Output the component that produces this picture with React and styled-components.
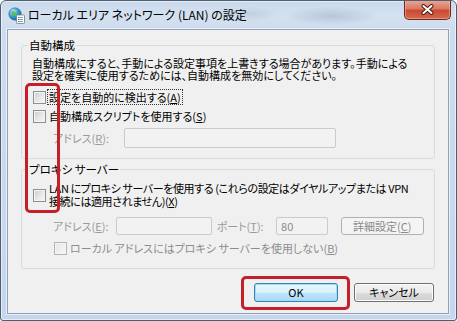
import styled, { createGlobalStyle } from "styled-components";

const GlobalStyle = createGlobalStyle`
  html, body { margin: 0; padding: 0; background: #ffffff; }
  body {
    font-family: "Noto Sans CJK JP", "Noto Sans", sans-serif;
    font-feature-settings: "palt";
    color: #000;
  }
  * { box-sizing: border-box; }
`;

export default function App() {
  return (
    <>
      <GlobalStyle />
      <Window>
        <TitleBar>
          <AppIcon />
          <Title>ローカル エリア ネットワーク (LAN) の設定</Title>
          <CloseButton aria-label="閉じる">
            <svg width="13" height="11" viewBox="0 0 13 11">
              <path d="M2.5 2 L10.5 9 M10.5 2 L2.5 9" stroke="#4a1810" strokeWidth="4" strokeLinecap="round" />
              <path d="M2.5 2 L10.5 9 M10.5 2 L2.5 9" stroke="#ffffff" strokeWidth="2" strokeLinecap="round" />
            </svg>
          </CloseButton>
        </TitleBar>
        <Frame>
          <Client>
            <Group>
              <Legend>自動構成</Legend>
              <Description>
                自動構成にすると、手動による設定事項を上書きする場合があります。手動による
                <br />
                設定を確実に使用するためには、自動構成を無効にしてください。
              </Description>
              <CheckRow $top={8}>
                <CheckBox />
                <Label $focused>設定を自動的に検出する(<u>A</u>)</Label>
              </CheckRow>
              <CheckRow $top={3}>
                <CheckBox />
                <Label>自動構成スクリプトを使用する(<u>S</u>)</Label>
              </CheckRow>
              <FieldRow $top={4} $height={20}>
                <FieldLabel $width={71}>アドレス(<u>R</u>):</FieldLabel>
                <TextBox $width={212} />
              </FieldRow>
            </Group>

            <Group $second>
              <Legend>プロキシ サーバー</Legend>
              <CheckRow $top={6}>
                <CheckBox />
                <Label $multi>
                  LAN にプロキシ サーバーを使用する (これらの設定はダイヤルアップまたは VPN
                  <br />
                  接続には適用されません)(<u>X</u>)
                </Label>
              </CheckRow>
              <FieldRow $top={9} $height={18}>
                <FieldLabel $width={64}>アドレス(<u>E</u>):</FieldLabel>
                <TextBox $width={96} />
                <FieldLabel $width={60} $gap={5}>ポート(<u>T</u>):</FieldLabel>
                <TextBox $width={52}>80</TextBox>
                <SmallButton disabled>詳細設定(<u>C</u>)</SmallButton>
              </FieldRow>
              <CheckRow $top={5} $indent={21}>
                <CheckBox $disabled />
                <Label $disabled>ローカル アドレスにはプロキシ サーバーを使用しない(<u>B</u>)</Label>
              </CheckRow>
            </Group>

            <ButtonRow>
              <DialogButton $default $width={84}>OK</DialogButton>
              <DialogButton $width={80}>キャンセル</DialogButton>
            </ButtonRow>
          </Client>
        </Frame>
        <Highlight $left={24} $top={82} $width={35} $height={130} />
        <Highlight $left={240} $top={275} $width={109} $height={34} />
      </Window>
    </>
  );
}

function AppIcon() {
  return (
    <IconWrap>
      <svg width="17" height="17" viewBox="0 0 17 17">
        <defs>
          <radialGradient id="globe" cx="35%" cy="30%" r="75%">
            <stop offset="0" stopColor="#c9eefc" />
            <stop offset="0.5" stopColor="#3c9fd6" />
            <stop offset="1" stopColor="#1b5f8f" />
          </radialGradient>
        </defs>
        <circle cx="7" cy="7" r="6.2" fill="url(#globe)" stroke="#2a6d98" strokeWidth="0.6" />
        <path d="M3 5 q2 -2 4 0 t2 3 q-2 2 -4 1 z" fill="#5bb84a" opacity="0.85" />
        <rect x="8.5" y="8" width="8" height="8.5" rx="0.8" fill="#ffffff" stroke="#6b7c8c" strokeWidth="0.8" />
        <path d="M10 10.5 h5 M10 12.5 h5 M10 14.5 h5" stroke="#7a8a98" strokeWidth="0.8" />
        <path d="M10 10.5 h1 M10 12.5 h1 M10 14.5 h1" stroke="#2e7cc0" strokeWidth="1" />
      </svg>
    </IconWrap>
  );
}

const Window = styled.div`
  position: relative;
  width: 457px;
  height: 321px;
  border: 1px solid #4e5f73;
  border-radius: 6px 6px 3px 3px;
  overflow: hidden;
  display: flex;
  flex-direction: column;
  background:
    radial-gradient(ellipse 48px 9px at 330px 15px, rgba(110, 130, 155, 0.28), transparent),
    radial-gradient(ellipse 30px 7px at 250px 13px, rgba(110, 130, 155, 0.18), transparent),
    linear-gradient(180deg, #c8d8eb 0px, #d4e1f0 14px, #cddcee 28px, #c5d7ec 100%);
  box-shadow: inset 0 0 0 1px rgba(255, 255, 255, 0.55);
`;

const TitleBar = styled.div`
  height: 28px;
  display: flex;
  align-items: center;
  padding-left: 7px;
`;

const IconWrap = styled.div`
  width: 17px;
  height: 17px;
  margin-top: 1px;
  display: flex;
`;

const Title = styled.div`
  margin-left: 3px;
  font-size: 12px;
  line-height: 16px;
  color: #000;
`;

const CloseButton = styled.div`
  align-self: flex-start;
  margin: -1px 5px 0 auto;
  width: 47px;
  height: 20px;
  display: flex;
  align-items: center;
  justify-content: center;
  border: 1px solid #6b2a20;
  border-top: none;
  border-radius: 0 0 5px 5px;
  background: linear-gradient(180deg, #e9a999 0%, #db7a63 45%, #c84a32 55%, #d56a4c 100%);
  box-shadow: inset 0 0 0 1px rgba(255, 200, 180, 0.45);
`;

const Frame = styled.div`
  flex: 1;
  display: flex;
  padding: 0 7px 6px 6px;
`;

const Client = styled.div`
  flex: 1;
  min-width: 0;
  display: flex;
  flex-direction: column;
  background: #f0f0f0;
  border: 1px solid #8fa2b8;
  box-shadow: 0 0 0 1px rgba(255, 255, 255, 0.6);
`;

const Group = styled.fieldset`
  margin: ${(p) => (p.$second ? "3px" : "8px")} 13px 0 13px;
  padding: 0 10px ${(p) => (p.$second ? "12px" : "10px")} 10px;
  border: 1px solid #d3dce2;
  border-radius: 3px;
  min-width: 0;
`;

const Legend = styled.legend`
  margin-left: -4px;
  padding: 0 1px;
  font-size: 11.5px;
  line-height: 14px;
`;

const Description = styled.div`
  margin-top: 5px;
  font-size: 11px;
  line-height: 12px;
  white-space: nowrap;
`;

const CheckRow = styled.div`
  margin-top: ${(p) => p.$top}px;
  margin-left: ${(p) => 1 + (p.$indent || 0)}px;
  display: flex;
  align-items: center;
  min-height: 16px;
`;

const CheckBox = styled.span`
  flex: none;
  width: 13px;
  height: 13px;
  border: 1px solid ${(p) => (p.$disabled ? "#b5b5b5" : "#8e8f8f")};
  background: ${(p) =>
    p.$disabled
      ? "linear-gradient(135deg, #e6e6e6 0%, #f7f7f7 100%)"
      : "linear-gradient(135deg, #c9ccd1 0%, #e9eaeb 60%, #f6f6f6 100%)"};
  box-shadow: inset 0 0 0 1px #f4f4f4;
`;

const Label = styled.span`
  margin-left: ${(p) => (p.$focused ? "2px" : "3px")};
  padding: ${(p) => (p.$focused ? "0 1px" : "0")};
  font-size: 11px;
  line-height: ${(p) => (p.$multi ? "13px" : "14px")};
  letter-spacing: ${(p) => (p.$multi ? "-0.4px" : "0")};
  white-space: nowrap;
  color: ${(p) => (p.$disabled ? "#8d8d8d" : "#000")};
  outline: ${(p) => (p.$focused ? "1px dotted #333" : "none")};
`;

const FieldRow = styled.div`
  margin-top: ${(p) => p.$top}px;
  margin-left: 21px;
  height: ${(p) => p.$height}px;
  display: flex;
  align-items: stretch;
`;

const FieldLabel = styled.span`
  width: ${(p) => p.$width}px;
  margin-left: ${(p) => p.$gap || 0}px;
  display: flex;
  align-items: center;
  font-size: 11px;
  color: #9a9a9a;
  white-space: nowrap;
`;

const TextBox = styled.div`
  width: ${(p) => p.$width}px;
  border: 1px solid #c9cbce;
  border-radius: 2px;
  background: #f2f2f2;
  padding-left: 4px;
  display: flex;
  align-items: center;
  font-size: 11px;
  color: #8d8d8d;
`;

const SmallButton = styled.button`
  margin-left: 13px;
  width: 84px;
  padding: 0;
  border: 1px solid #adb2b5;
  border-radius: 3px;
  background: #f4f4f4;
  font-family: inherit;
  font-feature-settings: "palt";
  font-size: 11px;
  color: #8a8a8a;
`;

const ButtonRow = styled.div`
  margin-top: 14px;
  padding-right: 14px;
  display: flex;
  justify-content: flex-end;
  gap: 16px;
`;

const DialogButton = styled.button`
  width: ${(p) => p.$width}px;
  height: 19px;
  padding: 0;
  border: 1px solid ${(p) => (p.$default ? "#3c7fb1" : "#707070")};
  border-radius: 3px;
  background: ${(p) =>
    p.$default
      ? "linear-gradient(180deg, #eaf6fd 0%, #d9f0fc 50%, #bee6fd 51%, #a7d9f5 100%)"
      : "linear-gradient(180deg, #f2f2f2 0%, #ebebeb 50%, #dddddd 51%, #cfcfcf 100%)"};
  box-shadow: inset 0 0 0 1px ${(p) => (p.$default ? "#9fdcf6" : "#fcfcfc")};
  font-family: inherit;
  font-feature-settings: "palt";
  font-size: 11px;
  line-height: 17px;
  color: #000;
`;

const Highlight = styled.div`
  position: absolute;
  left: ${(p) => p.$left}px;
  top: ${(p) => p.$top}px;
  width: ${(p) => p.$width}px;
  height: ${(p) => p.$height}px;
  border: 3px solid #c5202a;
  border-radius: 5px;
  pointer-events: none;
`;
